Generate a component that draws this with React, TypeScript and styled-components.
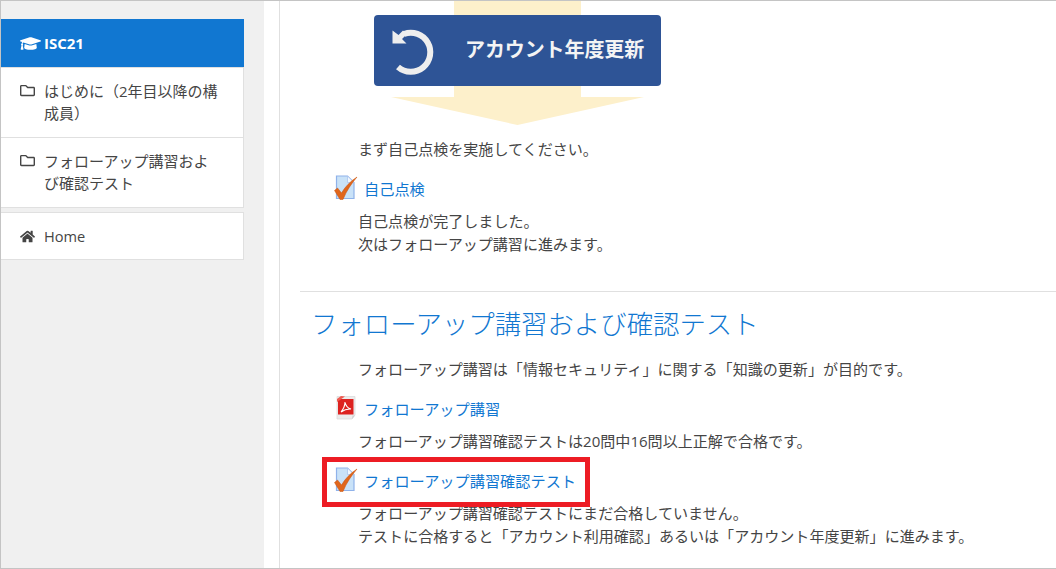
import styled, { createGlobalStyle } from "styled-components";
import { FaGraduationCap, FaHome, FaRegFolder } from "react-icons/fa";

const GlobalStyle = createGlobalStyle`
  html, body {
    margin: 0;
    padding: 0;
    background: #fff;
  }
  * {
    box-sizing: border-box;
  }
`;

const CheckIcon = () => (
  <svg width="24" height="26" viewBox="0 0 24 26">
    <path d="M2.5 1H13.5L20 7.5V23.5H2.5Z" fill="#c9e2f8" stroke="#8fb2ea" strokeWidth="1.2" />
    <path d="M13.5 1V7.5H20Z" fill="#f2f7fd" stroke="#a9c4ee" strokeWidth="0.8" />
    <path d="M0.5 15.5L3.5 13L7.5 18C11 12 16 6.5 23 2C18 8 12.5 15.5 9 24.5H6Z" fill="#e0661c" stroke="#c9540f" strokeWidth="0.5" />
  </svg>
);

const PdfIcon = () => (
  <svg width="24" height="26" viewBox="0 0 24 26">
    <path d="M3 1.5H21V20L18 24H3Z" fill="#ececec" stroke="#dcdcdc" strokeWidth="0.8" />
    <path d="M18 24L18.5 20.5H21Z" fill="#cfcfcf" />
    <rect x="4" y="4" width="15.5" height="15.5" fill="#dd2220" />
    <path d="M3 7V4L7 1L11 1.5Z" fill="#ee5a50" />
    <path d="M7 17C9.5 14 11 10 11 7C11.5 10 13.5 13 17 14C13.5 13.8 10 14.8 7 17Z" fill="none" stroke="#fff" strokeWidth="1.1" />
  </svg>
);

const App = () => {
  return (
    <Page>
      <GlobalStyle />
      <Sidebar>
        <Menu>
          <MenuHeader>
            <FaGraduationCap size={21} />
            <span>ISC21</span>
          </MenuHeader>
          <MenuItem>
            <FolderIcon />
            <span>はじめに（2年目以降の構成員）</span>
          </MenuItem>
          <MenuItem>
            <FolderIcon />
            <span>フォローアップ講習および確認テスト</span>
          </MenuItem>
        </Menu>
        <HomeCard>
          <FaHome size={15} />
          <span>Home</span>
        </HomeCard>
      </Sidebar>
      <Main>
        <Banner>
          <Stem />
          <ArrowHead />
          <RenewButton>
            <svg width="48" height="48" viewBox="0 0 48 48">
              <path d="M13 7A19.5 19.5 0 1 1 7 40" fill="none" stroke="#eeeeee" strokeWidth="6" />
              <path d="M1.5 3.5V16.5H15.5L11 12L16 7L12 3.5L7.5 8Z" fill="#eeeeee" />
            </svg>
            <RenewLabel>アカウント年度更新</RenewLabel>
          </RenewButton>
        </Banner>
        <Block>
          <Para>まず自己点検を実施してください。</Para>
          <LinkRow>
            <CheckIcon />
            <ActivityLink>自己点検</ActivityLink>
          </LinkRow>
          <Para>
            自己点検が完了しました。
            <br />
            次はフォローアップ講習に進みます。
          </Para>
        </Block>
        <Divider />
        <SectionTitle>フォローアップ講習および確認テスト</SectionTitle>
        <Block>
          <Para>フォローアップ講習は「情報セキュリティ」に関する「知識の更新」が目的です。</Para>
          <LinkRow>
            <PdfIcon />
            <ActivityLink>フォローアップ講習</ActivityLink>
          </LinkRow>
          <Para>フォローアップ講習確認テストは20問中16問以上正解で合格です。</Para>
          <LinkRow>
            <CheckIcon />
            <ActivityLink>フォローアップ講習確認テスト</ActivityLink>
            <Highlight />
          </LinkRow>
          <Para>
            フォローアップ講習確認テストにまだ合格していません。
            <br />
            テストに合格すると「アカウント利用確認」あるいは「アカウント年度更新」に進みます。
          </Para>
        </Block>
      </Main>
    </Page>
  );
};

const Page = styled.div`
  display: flex;
  width: 1056px;
  height: 569px;
  overflow: hidden;
  background: #fff;
  border-top: 1px solid #c4c4c4;
  border-left: 1px solid #c4c4c4;
  border-bottom: 1px solid #c4c4c4;
  font-family: "Open Sans", "Noto Sans CJK JP", sans-serif;
  font-size: 15px;
  color: #454545;
`;

const Sidebar = styled.aside`
  width: 263px;
  flex-shrink: 0;
  background: #f0f0f0;
  padding-top: 18px;
`;

const Menu = styled.div`
  width: 243px;
`;

const MenuHeader = styled.div`
  display: flex;
  align-items: center;
  gap: 3px;
  height: 48px;
  padding-left: 19px;
  background: #1177d1;
  color: #fff;
  font-weight: 700;
  font-size: 15px;
`;

const MenuItem = styled.div`
  display: flex;
  gap: 9px;
  height: 70px;
  padding: 12px 23px 0 19px;
  background: #fff;
  border-top: 1px solid #e0e0e0;
  border-right: 1px solid #e0e0e0;
  line-height: 22px;
  font-size: 15px;

  &:last-child {
    height: 71px;
    border-bottom: 1px solid #e0e0e0;
  }
`;

const FolderIcon = styled(FaRegFolder)`
  flex-shrink: 0;
  width: 15px;
  height: 15px;
  margin-top: 3px;
`;

const HomeCard = styled.div`
  display: flex;
  align-items: center;
  gap: 9px;
  width: 243px;
  height: 48px;
  margin-top: 4px;
  padding-left: 19px;
  background: #fff;
  border: 1px solid #e0e0e0;
  border-left: 0;
  font-size: 14.6px;
`;

const Main = styled.main`
  flex: 1;
  margin-left: 15px;
  border-left: 1px solid #e0e0e0;
  padding-left: 20px;
`;

const Banner = styled.div`
  position: relative;
  width: 400px;
  height: 124px;
  margin-bottom: 13px;
`;

const Stem = styled.div`
  width: 127px;
  height: 96px;
  margin-left: 154px;
  background: #fdf0cb;
`;

const ArrowHead = styled.div`
  width: 253px;
  height: 28px;
  margin-left: 91px;
  background: #fdf0cb;
  clip-path: polygon(0 0, 100% 0, 50% 100%);
`;

const RenewButton = styled.div`
  position: absolute;
  left: 74px;
  top: 14px;
  display: flex;
  align-items: center;
  width: 287px;
  height: 71px;
  padding-left: 17px;
  background: #2e5496;
  border-radius: 4px;
`;

const RenewLabel = styled.span`
  margin-left: 26px;
  margin-top: -5px;
  color: #f4f4f4;
  font-size: 20px;
  font-weight: 700;
  letter-spacing: -0.1px;
  white-space: nowrap;
`;

const Block = styled.div`
  padding-left: 58px;
`;

const Para = styled.p`
  margin: 0;
  line-height: 23px;
  font-size: 15.05px;
`;

const LinkRow = styled.div`
  position: relative;
  display: flex;
  align-items: center;
  gap: 6px;
  width: fit-content;
  height: 30px;
  margin: 12px 0 7px -24px;
`;

const ActivityLink = styled.a`
  color: #1177d1;
  font-size: 15.2px;
  cursor: pointer;
`;

const Highlight = styled.div`
  position: absolute;
  left: -12px;
  right: -14px;
  top: -8px;
  bottom: -12px;
  border: 5px solid #ed1c24;
`;

const Divider = styled.hr`
  margin: 35px 0 0;
  border: 0;
  border-top: 1px solid #e0e0e0;
`;

const SectionTitle = styled.h3`
  margin: 14px 0 16px 11px;
  font-size: 26.4px;
  font-weight: 300;
  line-height: 36px;
  color: #1177d1;
`;

export default App;
